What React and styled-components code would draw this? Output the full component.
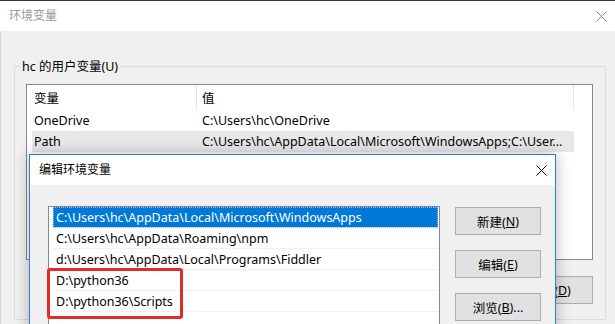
import React from 'react'
import styled, { createGlobalStyle } from 'styled-components'

const GlobalStyle = createGlobalStyle`
  html, body {
    margin: 0;
    padding: 0;
    width: 615px;
    height: 324px;
    overflow: hidden;
    background: #f0f0f0;
  }
  body {
    font-family: "Noto Sans", "Noto Sans CJK SC", sans-serif;
    font-size: 12.5px;
    color: #000;
  }
`

const Screen = styled.div`
  position: relative;
  width: 615px;
  height: 324px;
  overflow: hidden;
`

const Window = styled.div`
  display: flex;
  flex-direction: column;
  height: 100%;
  border-top: 1px solid #26384a;
  box-sizing: border-box;
`

const TitleBar = styled.div`
  display: flex;
  align-items: center;
  justify-content: space-between;
  height: 30px;
  flex-shrink: 0;
  background: #fff;
  padding: 0 8px 0 9px;
  color: ${p => (p.inactive ? '#999' : '#000')};
  font-size: 12px;
  line-height: 1;
`

const CloseIcon = ({ color }) => (
  <svg width="11" height="11" viewBox="0 0 11 11">
    <path d="M0.5 0.5 L10.5 10.5 M10.5 0.5 L0.5 10.5" stroke={color} strokeWidth="1" fill="none" />
  </svg>
)

const Body = styled.div`
  flex: 1;
  background: #f0f0f0;
  border-left: 1px solid #d4d4d4;
  padding: 27px 9px 0 13px;
`

const Group = styled.fieldset`
  margin: 0;
  padding: 0 12px 0 11px;
  border: 1px solid #dcdcdc;
  height: 262px;
  box-sizing: border-box;
`

const Legend = styled.legend`
  margin-left: -6px;
  padding: 0 2px;
  line-height: 17px;
`

const ListView = styled.div`
  margin-top: 9px;
  height: 176px;
  box-sizing: border-box;
  border: 1px solid #828790;
  background: #fff;
  padding-left: 5px;
`

const HeaderRow = styled.div`
  display: flex;
  height: 25px;
`

const HeaderCell = styled.div`
  width: ${p => p.w}px;
  box-sizing: border-box;
  display: flex;
  align-items: center;
  padding-left: ${p => (p.sep ? 5 : 2)}px;
  border-left: ${p => (p.sep ? '1px solid #e5e5e5' : 'none')};
  border-right: ${p => (p.end ? '1px solid #e5e5e5' : 'none')};
`

const Row = styled.div`
  display: flex;
  height: 21px;
  align-items: center;
  width: 542px;
  background: ${p => (p.selected ? '#e8e8e8' : 'transparent')};
`

const Cell = styled.div`
  width: ${p => p.w}px;
  box-sizing: border-box;
  padding-left: ${p => p.pad}px;
  white-space: nowrap;
  overflow: hidden;
`

const ButtonRow = styled.div`
  display: flex;
  justify-content: flex-end;
  gap: 10px;
  margin-top: 16px;
`

const Button = styled.div`
  width: 86px;
  height: 28px;
  box-sizing: border-box;
  border: 1px solid #adadad;
  background: #e1e1e1;
  display: flex;
  align-items: center;
  justify-content: center;
  u {
    text-decoration: underline;
    text-underline-offset: 1px;
  }
`

const Dialog = styled.div`
  position: absolute;
  left: 29px;
  top: 154px;
  width: 527px;
  height: 200px;
  box-sizing: border-box;
  border: 1px solid #2a7fd6;
  background: #f0f0f0;
  box-shadow: 0 0 14px rgba(0, 0, 0, 0.28);
  display: flex;
  flex-direction: column;
`

const DialogBody = styled.div`
  display: flex;
  align-items: flex-start;
  gap: 15px;
  padding: 21px 0 0 18px;
`

const ListBox = styled.div`
  width: 392px;
  height: 140px;
  box-sizing: border-box;
  border: 1px solid #828790;
  background: #fff;
  padding: 0 1px 0 4px;
`

const Item = styled.div`
  height: 21px;
  box-sizing: border-box;
  border-bottom: 1px solid #f0f0f0;
  padding-left: 3px;
  display: flex;
  align-items: center;
  white-space: nowrap;
  background: ${p => (p.selected ? '#0078d7' : 'transparent')};
  color: ${p => (p.selected ? '#fff' : '#000')};
  outline: ${p => (p.selected ? '1px dotted #8fc3ee' : 'none')};
  outline-offset: -1px;
`

const ButtonColumn = styled.div`
  display: flex;
  flex-direction: column;
  gap: 15px;
  padding-top: 1px;
`

const Marker = styled.div`
  position: absolute;
  left: 47px;
  top: 268px;
  width: 136px;
  height: 51px;
  box-sizing: border-box;
  border: 3px solid #e52a2a;
  border-radius: 3px;
`

const paths = [
  'C:\\Users\\hc\\AppData\\Local\\Microsoft\\WindowsApps',
  'C:\\Users\\hc\\AppData\\Roaming\\npm',
  'd:\\Users\\hc\\AppData\\Local\\Programs\\Fiddler',
  'D:\\python36',
  'D:\\python36\\Scripts',
  '',
]

const App = () => {
  return (
    <Screen>
      <GlobalStyle />
      <Window>
        <TitleBar inactive>
          <span>环境变量</span>
          <CloseIcon color="#8a8a8a" />
        </TitleBar>
        <Body>
          <Group>
            <Legend>hc 的用户变量(U)</Legend>
            <ListView>
              <HeaderRow>
                <HeaderCell w={164}>变量</HeaderCell>
                <HeaderCell w={378} sep end>值</HeaderCell>
              </HeaderRow>
              <Row>
                <Cell w={164} pad={2}>OneDrive</Cell>
                <Cell w={378} pad={6}>C:\Users\hc\OneDrive</Cell>
              </Row>
              <Row selected>
                <Cell w={164} pad={2}>Path</Cell>
                <Cell w={378} pad={6}>C:\Users\hc\AppData\Local\Microsoft\WindowsApps;C:\User...</Cell>
              </Row>
            </ListView>
            <ButtonRow>
              <Button>新建(<u>N</u>)...</Button>
              <Button>编辑(<u>E</u>)...</Button>
              <Button>删除(<u>D</u>)</Button>
            </ButtonRow>
          </Group>
        </Body>
      </Window>

      <Dialog>
        <TitleBar>
          <span>编辑环境变量</span>
          <CloseIcon color="#111" />
        </TitleBar>
        <DialogBody>
          <ListBox>
            {paths.map((p, i) => (
              <Item key={i} selected={i === 0}>{p}</Item>
            ))}
          </ListBox>
          <ButtonColumn>
            <Button>新建(<u>N</u>)</Button>
            <Button>编辑(<u>E</u>)</Button>
            <Button>浏览(<u>B</u>)...</Button>
          </ButtonColumn>
        </DialogBody>
      </Dialog>

      <Marker />
    </Screen>
  )
}

export default App
